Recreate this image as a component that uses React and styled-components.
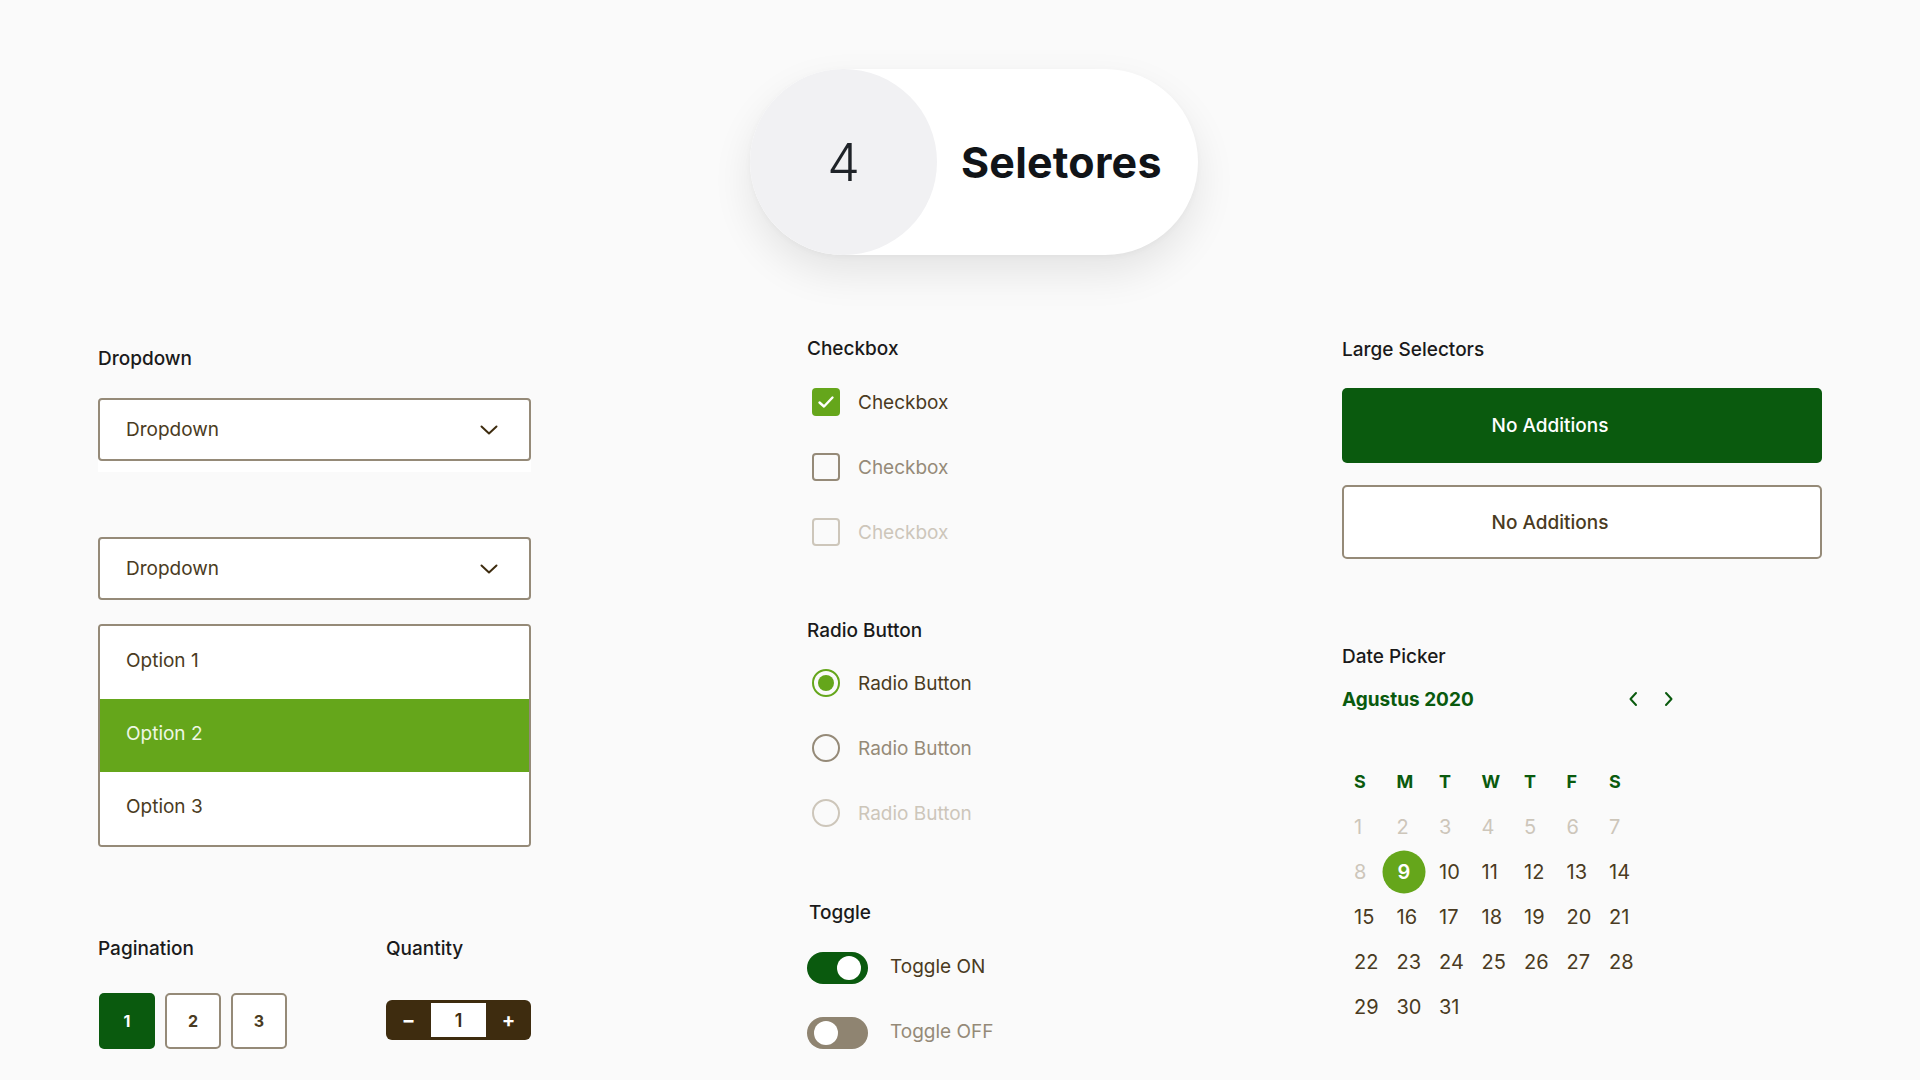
import React from 'react';
import styled, { createGlobalStyle } from 'styled-components';

const GlobalStyle = createGlobalStyle`
  * {
    box-sizing: border-box;
  }
  body {
    margin: 0;
    background: #fafafa;
    font-family: Inter, "Noto Sans", sans-serif;
  }
`;

const DARK_GREEN = '#0a5a0e';
const GREEN = '#65a61b';
const BROWN_BORDER = '#958a78';
const BROWN_TEXT = '#4a3b22';
const MUTED = '#958a78';
const FAINT = '#cdc6ba';

const days = Array.from({ length: 31 }, (_, i) => i + 1);
const weekDays = ['S', 'M', 'T', 'W', 'T', 'F', 'S'];

const Chevron = () => (
  <svg width="18" height="10" viewBox="0 0 18 10" fill="none">
    <polyline points="1.5,1.5 9,8.5 16.5,1.5" stroke="#3e2c0f" strokeWidth="2" strokeLinecap="round" strokeLinejoin="round" />
  </svg>
);

const Arrow = ({ dir }) => (
  <svg width="10" height="16" viewBox="0 0 10 16" fill="none">
    <polyline
      points={dir === 'left' ? '8,2 2.5,8 8,14' : '2,2 7.5,8 2,14'}
      stroke={DARK_GREEN}
      strokeWidth="2"
      strokeLinecap="round"
      strokeLinejoin="round"
    />
  </svg>
);

const App = () => {
  return (
    <Page>
      <GlobalStyle />
      <Header>
        <Pill>
          <Number>4</Number>
          <Title>Seletores</Title>
        </Pill>
      </Header>

      <Main>
        <ColumnOne>
          <Label>Dropdown</Label>
          <DropdownWrap>
            <DropdownBox>
              Dropdown <Chevron />
            </DropdownBox>
          </DropdownWrap>
          <DropdownBox $top={65}>
            Dropdown <Chevron />
          </DropdownBox>
          <OptionList>
            <Option>Option 1</Option>
            <Option $active>Option 2</Option>
            <Option>Option 3</Option>
          </OptionList>

          <BottomRow>
            <PaginationGroup>
              <Label>Pagination</Label>
              <PageButtons>
                <PageButton $active>1</PageButton>
                <PageButton>2</PageButton>
                <PageButton>3</PageButton>
              </PageButtons>
            </PaginationGroup>
            <div>
              <Label>Quantity</Label>
              <Quantity>
                <QtyButton>−</QtyButton>
                <QtyValue>1</QtyValue>
                <QtyButton>+</QtyButton>
              </Quantity>
            </div>
          </BottomRow>
        </ColumnOne>

        <ColumnTwo>
          <Label>Checkbox</Label>
          <Group>
            <Row>
              <CheckBox $state="checked">
                <svg width="18" height="14" viewBox="0 0 18 14" fill="none">
                  <polyline points="2.5,7.5 7,11.5 15.5,2.5" stroke="#fff" strokeWidth="2.4" strokeLinecap="round" strokeLinejoin="round" />
                </svg>
              </CheckBox>
              <RowText $state="checked">Checkbox</RowText>
            </Row>
            <Row>
              <CheckBox $state="off" />
              <RowText $state="off">Checkbox</RowText>
            </Row>
            <Row>
              <CheckBox $state="disabled" />
              <RowText $state="disabled">Checkbox</RowText>
            </Row>
          </Group>

          <Label $top={74}>Radio Button</Label>
          <Group $top={27}>
            <Row>
              <Radio $state="checked" />
              <RowText $state="checked">Radio Button</RowText>
            </Row>
            <Row>
              <Radio $state="off" />
              <RowText $state="off">Radio Button</RowText>
            </Row>
            <Row>
              <Radio $state="disabled" />
              <RowText $state="disabled">Radio Button</RowText>
            </Row>
          </Group>

          <Label $top={75} $indent={2}>Toggle</Label>
          <Group $top={28} $gap={33}>
            <Row>
              <Toggle $on>
                <Knob />
              </Toggle>
              <ToggleText $on>Toggle ON</ToggleText>
            </Row>
            <Row>
              <Toggle>
                <Knob />
              </Toggle>
              <ToggleText>Toggle OFF</ToggleText>
            </Row>
          </Group>
        </ColumnTwo>

        <ColumnThree>
          <Label>Large Selectors</Label>
          <LargeButton $active $top={27}>No Additions</LargeButton>
          <LargeButton $top={22}>No Additions</LargeButton>

          <Label $top={87}>Date Picker</Label>
          <MonthRow>
            <Month>Agustus 2020</Month>
            <MonthNav>
              <Arrow dir="left" />
              <Arrow dir="right" />
            </MonthNav>
          </MonthRow>
          <Calendar>
            {weekDays.map((d, i) => (
              <WeekDay key={i}>{d}</WeekDay>
            ))}
            {days.map(d => (
              <Day key={d} $past={d < 9}>
                {d === 9 ? <Selected>{d}</Selected> : d}
              </Day>
            ))}
          </Calendar>
        </ColumnThree>
      </Main>
    </Page>
  );
};

export default App;

const Page = styled.div`
  width: 1920px;
  height: 1080px;
  overflow: hidden;
  background: #fafafa;
`;

const Header = styled.div`
  display: flex;
  justify-content: center;
  padding-top: 69px;
  padding-left: 28px;
`;

const Pill = styled.div`
  width: 448px;
  height: 186px;
  border-radius: 93px;
  background: #fff;
  display: flex;
  align-items: center;
  box-shadow: 0 18px 40px rgba(0, 0, 0, 0.09), 0 2px 6px rgba(0, 0, 0, 0.03);
`;

const Number = styled.div`
  width: 187px;
  height: 186px;
  border-radius: 50%;
  background: #f1f1f3;
  display: flex;
  align-items: center;
  justify-content: center;
  font-size: 52px;
  font-weight: 300;
  color: #1f2328;
`;

const Title = styled.div`
  padding-left: 24px;
  font-size: 43px;
  font-weight: 700;
  color: #111418;
  letter-spacing: 0.2px;
`;

const Main = styled.div`
  display: flex;
  padding-left: 98px;
  margin-top: 83px;
`;

const ColumnOne = styled.div`
  width: 433px;
  margin-top: 10px;
  display: flex;
  flex-direction: column;
`;

const ColumnTwo = styled.div`
  width: 535px;
  margin-left: 276px;
  display: flex;
  flex-direction: column;
`;

const ColumnThree = styled.div`
  width: 480px;
  margin-top: 1px;
  display: flex;
  flex-direction: column;
`;

const Label = styled.div`
  font-size: 19px;
  line-height: 22px;
  font-weight: 500;
  color: #1a1a1a;
  margin-top: ${p => p.$top || 0}px;
  margin-left: ${p => p.$indent || 0}px;
`;

const DropdownWrap = styled.div`
  margin-top: 28px;
  background: #fff;
  padding-bottom: 11px;
`;

const DropdownBox = styled.div`
  height: 63px;
  margin-top: ${p => p.$top || 0}px;
  border: 2px solid ${BROWN_BORDER};
  border-radius: 4px;
  background: #fff;
  display: flex;
  align-items: center;
  justify-content: space-between;
  padding: 0 31px 0 26px;
  font-size: 19px;
  color: ${BROWN_TEXT};
`;

const OptionList = styled.div`
  margin-top: 24px;
  border: 2px solid ${BROWN_BORDER};
  border-radius: 4px;
  background: #fff;
  overflow: hidden;
`;

const Option = styled.div`
  height: 73px;
  display: flex;
  align-items: center;
  padding: 0 0 4px 26px;
  font-size: 19px;
  color: ${p => (p.$active ? '#eef7e4' : BROWN_TEXT)};
  background: ${p => (p.$active ? GREEN : '#fff')};
`;

const BottomRow = styled.div`
  margin-top: 91px;
  display: flex;
`;

const PaginationGroup = styled.div`
  width: 288px;
`;

const PageButtons = styled.div`
  margin-top: 33px;
  display: flex;
  gap: 10px;
  padding-left: 1px;
`;

const PageButton = styled.div`
  width: 56px;
  height: 56px;
  border-radius: 5px;
  display: flex;
  align-items: center;
  justify-content: center;
  font-size: 16px;
  font-weight: 700;
  background: ${p => (p.$active ? DARK_GREEN : '#fff')};
  color: ${p => (p.$active ? '#fff' : BROWN_TEXT)};
  border: ${p => (p.$active ? 'none' : `2px solid ${BROWN_BORDER}`)};
`;

const Quantity = styled.div`
  margin-top: 40px;
  width: 145px;
  height: 40px;
  border-radius: 6px;
  background: #3e2c0f;
  display: flex;
  align-items: center;
  padding: 3px 0;
`;

const QtyButton = styled.div`
  width: 45px;
  text-align: center;
  color: #fff;
  font-size: 20px;
  font-weight: 700;
`;

const QtyValue = styled.div`
  width: 55px;
  height: 34px;
  background: #fff;
  display: flex;
  align-items: center;
  justify-content: center;
  font-size: 18px;
  font-weight: 600;
  color: #3e2c0f;
`;

const Group = styled.div`
  margin-top: ${p => (p.$top === undefined ? 28 : p.$top)}px;
  display: flex;
  flex-direction: column;
  gap: ${p => p.$gap || 37}px;
`;

const Row = styled.div`
  display: flex;
  align-items: center;
`;

const stateColor = s => (s === 'checked' ? BROWN_TEXT : s === 'off' ? MUTED : FAINT);

const CheckBox = styled.div`
  width: 28px;
  height: 28px;
  margin-left: 5px;
  border-radius: 4px;
  display: flex;
  align-items: center;
  justify-content: center;
  background: ${p => (p.$state === 'checked' ? GREEN : 'transparent')};
  border: ${p =>
    p.$state === 'checked' ? 'none' : `2px solid ${p.$state === 'off' ? MUTED : FAINT}`};
`;

const Radio = styled.div`
  width: 28px;
  height: 28px;
  margin-left: 5px;
  border-radius: 50%;
  border: 2px solid ${p => (p.$state === 'checked' ? GREEN : p.$state === 'off' ? MUTED : FAINT)};
  display: flex;
  align-items: center;
  justify-content: center;

  &::after {
    content: '';
    display: ${p => (p.$state === 'checked' ? 'block' : 'none')};
    width: 16px;
    height: 16px;
    border-radius: 50%;
    background: ${GREEN};
  }
`;

const RowText = styled.div`
  margin-left: 18px;
  font-size: 19px;
  color: ${p => stateColor(p.$state)};
`;

const Toggle = styled.div`
  width: 61px;
  height: 32px;
  border-radius: 16px;
  display: flex;
  align-items: center;
  justify-content: ${p => (p.$on ? 'flex-end' : 'flex-start')};
  padding: 0 7px;
  background: ${p => (p.$on ? DARK_GREEN : '#8f8471')};
`;

const Knob = styled.div`
  width: 24px;
  height: 24px;
  border-radius: 50%;
  background: #fff;
`;

const ToggleText = styled.div`
  margin-left: 22px;
  margin-bottom: 3px;
  font-size: 19px;
  color: ${p => (p.$on ? BROWN_TEXT : MUTED)};
`;

const LargeButton = styled.div`
  margin-top: ${p => p.$top}px;
  height: ${p => (p.$active ? 75 : 74)}px;
  border-radius: 5px;
  display: flex;
  align-items: center;
  justify-content: center;
  padding-right: 64px;
  font-size: 19px;
  font-weight: 500;
  background: ${p => (p.$active ? DARK_GREEN : '#fff')};
  color: ${p => (p.$active ? '#fff' : BROWN_TEXT)};
  border: ${p => (p.$active ? 'none' : `2px solid ${BROWN_BORDER}`)};
`;

const MonthRow = styled.div`
  margin-top: 19px;
  width: 332px;
  height: 24px;
  display: flex;
  align-items: center;
  justify-content: space-between;
`;

const Month = styled.div`
  font-size: 19px;
  font-weight: 700;
  color: ${DARK_GREEN};
`;

const MonthNav = styled.div`
  display: flex;
  align-items: center;
  gap: 26px;
`;

const Calendar = styled.div`
  margin-top: 48px;
  padding-left: 12px;
  display: grid;
  grid-template-columns: repeat(7, 42.5px);
  grid-auto-rows: 45px;
  align-items: center;
`;

const WeekDay = styled.div`
  font-size: 18px;
  font-weight: 700;
  color: ${DARK_GREEN};
`;

const Day = styled.div`
  font-size: 20px;
  color: ${p => (p.$past ? FAINT : BROWN_TEXT)};
`;

const Selected = styled.span`
  position: relative;
  z-index: 0;
  color: #fff;
  font-weight: 600;
  margin-left: 1px;

  &::before {
    content: '';
    position: absolute;
    z-index: -1;
    left: 50%;
    top: 50%;
    width: 43px;
    height: 43px;
    border-radius: 50%;
    background: ${GREEN};
    transform: translate(-50%, -50%);
  }
`;
